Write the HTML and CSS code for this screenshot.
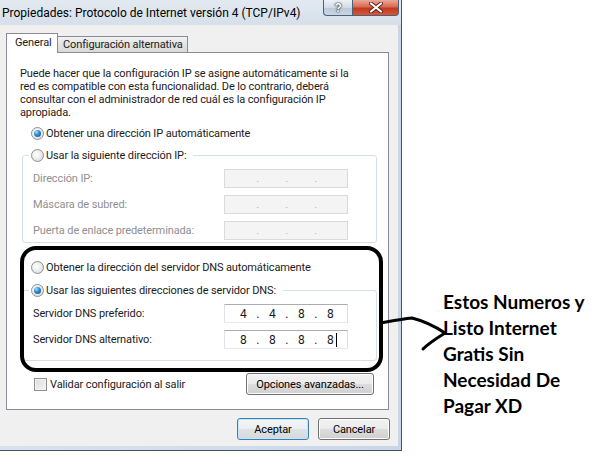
FILE: index.html
```html
<!DOCTYPE html>
<html lang="es">
<head>
<meta charset="utf-8">
<title>Propiedades TCP/IPv4</title>
<link rel="stylesheet" href="styles.css">
</head>
<body>
<div class="page">
  <div class="window">
    <div class="titlebar">
      <div class="title">Propiedades: Protocolo de Internet versión 4 (TCP/IPv4)</div>
      <div class="caption-btns">
        <div class="cbtn help">?</div>
        <div class="cbtn close">
          <svg width="16" height="11" viewBox="0 0 16 11">
            <path d="M3 1.5 L13 9.5 M13 1.5 L3 9.5" stroke="#5a2418" stroke-width="4" stroke-linecap="round"/>
            <path d="M3 1.5 L13 9.5 M13 1.5 L3 9.5" stroke="#ffffff" stroke-width="2.2" stroke-linecap="round"/>
          </svg>
        </div>
      </div>
    </div>
    <div class="dialog">
      <div class="tabs">
        <div class="tab active">General</div>
        <div class="tab">Configuración alternativa</div>
      </div>
      <div class="panel">
        <p class="intro">Puede hacer que la configuración IP se asigne automáticamente si la<br>red es compatible con esta funcionalidad. De lo contrario, deberá<br>consultar con el administrador de red cuál es la configuración IP<br>apropiada.</p>

        <div class="radio-row first"><span class="radio checked"></span>Obtener una dirección IP automáticamente</div>

        <fieldset class="group ip-group">
          <legend><span class="radio"></span>Usar la siguiente dirección IP:</legend>
          <div class="field disabled first-field">
            <span>Dirección IP:</span>
            <div class="ipbox"><span></span><span>.</span><span></span><span>.</span><span></span><span>.</span><span></span></div>
          </div>
          <div class="field disabled">
            <span>Máscara de subred:</span>
            <div class="ipbox"><span></span><span>.</span><span></span><span>.</span><span></span><span>.</span><span></span></div>
          </div>
          <div class="field disabled">
            <span>Puerta de enlace predeterminada:</span>
            <div class="ipbox"><span></span><span>.</span><span></span><span>.</span><span></span><span>.</span><span></span></div>
          </div>
        </fieldset>

        <div class="radio-row dns-auto"><span class="radio"></span>Obtener la dirección del servidor DNS automáticamente</div>

        <fieldset class="group dns-group">
          <legend><span class="radio checked"></span>Usar las siguientes direcciones de servidor DNS:</legend>
          <div class="field first-field">
            <span>Servidor DNS preferido:</span>
            <div class="ipbox"><span>4</span><span>.</span><span>4</span><span>.</span><span>8</span><span>.</span><span>8</span></div>
          </div>
          <div class="field">
            <span>Servidor DNS alternativo:</span>
            <div class="ipbox"><span>8</span><span>.</span><span>8</span><span>.</span><span>8</span><span>.</span><span class="caret-seg">8<i class="caret"></i></span></div>
          </div>
        </fieldset>

        <div class="bottom-row">
          <div class="check-row"><span class="checkbox"></span>Validar configuración al salir</div>
          <div class="btn wide">Opciones avanzadas...</div>
        </div>

        <div class="highlight"></div>
      </div>
      <div class="actions">
        <div class="btn default">Aceptar</div>
        <div class="btn">Cancelar</div>
      </div>
    </div>
  </div>
  <div class="note">Estos Numeros y<br>Listo Internet<br>Gratis Sin<br>Necesidad De<br>Pagar XD</div>
</div>
<svg class="arrow" width="600" height="475" viewBox="0 0 600 475">
  <path d="M381 323 C392 321 402 319 412 318 C424 321 436 327 445 333 C437 338 429 343 423 349" fill="none" stroke="#000" stroke-width="3" stroke-linecap="round" stroke-linejoin="round"/>
</svg>
</body>
</html>
```
FILE: styles.css
```css
* { box-sizing: border-box; }
html, body { margin: 0; padding: 0; background: #fff; }
body {
  width: 600px;
  height: 475px;
  overflow: hidden;
  position: relative;
  font-family: "Roboto", "Liberation Sans", sans-serif;
  font-size: 11px;
  letter-spacing: -0.12px;
  color: #1b1b1b;
}
.page { display: flex; align-items: flex-start; }

/* window */
.window {
  width: 402px;
  height: 451px;
  display: flex;
  flex-direction: column;
  background: linear-gradient(to right, #d8e3ee, #c9d7e5);
  padding: 0 3px 4px 0;
  border-right: 1px solid #44546a;
  border-bottom: 1px solid #44546a;
}
.titlebar {
  height: 25px;
  display: flex;
  justify-content: space-between;
  align-items: flex-start;
  background: linear-gradient(to bottom, #e2e9f1, #d6e0ea);
  margin-right: -3px;
}
.title {
  font-size: 12px;
  letter-spacing: 0;
  line-height: 26px;
  padding-left: 2px;
  color: #000;
  white-space: nowrap;
}
.caption-btns { display: flex; margin-right: 2px; }
.cbtn {
  height: 16px;
  border: 1px solid #4f5f74;
  border-top: none;
  display: flex;
  align-items: center;
  justify-content: center;
}
.help {
  width: 29px;
  border-radius: 0 0 0 4px;
  border-right: none;
  background: linear-gradient(to bottom, #eef2f7, #d2dce8 50%, #b9c8d9 51%, #c9d6e4);
  color: #fff;
  font-weight: bold;
  font-size: 12px;
  font-family: "Liberation Sans", sans-serif;
  text-shadow: 0 0 1px #2c3a4c, 0 0 1px #2c3a4c, 0 0 2px #2c3a4c;
}
.close {
  width: 47px;
  border-radius: 0 0 4px 0;
  background: linear-gradient(to bottom, #eaa898, #d66d55 45%, #c2391e 55%, #d6573a);
}

.dialog {
  flex: 1;
  background: #f0f0f0;
  padding: 8px 0 0 6px;
  display: flex;
  flex-direction: column;
}

/* tabs */
.tabs { display: flex; align-items: flex-end; height: 19px; position: relative; z-index: 2; }
.tab {
  height: 16px;
  border: 1px solid #898c95;
  border-bottom: none;
  border-left: none;
  background: linear-gradient(to bottom, #f2f2f2, #e3e3e3 50%, #d9d9d9);
  padding: 0 4px 0 5px;
  line-height: 15px;
  white-space: nowrap;
}
.tab.active {
  height: 20px;
  margin-bottom: -1px;
  width: 52px;
  background: #fff;
  border-left: 1px solid #898c95;
  padding-left: 8px;
  line-height: 18px;
}

/* panel */
.panel {
  position: relative;
  width: 383px;
  background: #fff;
  border: 1px solid #898c95;
  padding-bottom: 14px;
}
.intro {
  margin: 14px 0 0 13px;
  line-height: 13px;
  white-space: nowrap;
}
.radio-row {
  display: flex;
  align-items: center;
  height: 16px;
  gap: 2px;
  margin-left: 24px;
}
.radio-row.first { margin-top: 6px; }
.radio-row.dns-auto { margin-top: 16px; }
.radio {
  width: 13px;
  height: 13px;
  border-radius: 50%;
  border: 1px solid #8d9095;
  background: radial-gradient(circle at 40% 40%, #ffffff 0, #f0f0f0 40%, #cfd1d4 100%);
  position: relative;
  flex: none;
}
.radio.checked::after {
  content: "";
  position: absolute;
  left: 2px;
  top: 2px;
  width: 7px;
  height: 7px;
  border-radius: 50%;
  background: radial-gradient(circle at 35% 30%, #a9e2ff 0, #2f8fd3 40%, #0b4e93 100%);
}

.group {
  margin: 6px 0 0 15px;
  width: 355px;
  border: 1px solid #d5dfe5;
  border-radius: 3px;
  padding: 0 28px 2px 10px;
}
.group.dns-group { margin-top: 7px; padding-bottom: 11px; }
.group legend {
  display: flex;
  align-items: center;
  gap: 2px;
  height: 16px;
  margin-left: -4px;
  padding: 0 7px 0 2px;
}
.field {
  display: flex;
  justify-content: space-between;
  align-items: center;
  height: 19px;
  margin-top: 7px;
}
.field.first-field { margin-top: 6px; }
.field.disabled > span { color: #8f8f8f; }

.ipbox {
  width: 124px;
  height: 19px;
  border: 1px solid #abadb3;
  border-left-color: #e2e3ea;
  border-right-color: #dbdfe6;
  border-bottom-color: #e3e9ef;
  background: #fff;
  display: flex;
  align-items: center;
  padding-left: 11px;
  font-size: 12px;
  letter-spacing: 0;
}
.field.disabled .ipbox {
  background: #f4f4f4;
  border-color: #dadada;
  color: #8f8f8f;
  font-size: 9px;
}
.ipbox span { width: 14.5px; text-align: center; flex: none; }
.caret-seg { position: relative; }
.caret {
  position: absolute;
  right: 1px;
  top: 0;
  width: 1px;
  height: 14px;
  background: #000;
}

.bottom-row {
  display: flex;
  justify-content: space-between;
  align-items: center;
  margin: 12px 14px 0 27px;
  height: 22px;
}
.check-row { display: flex; align-items: center; gap: 3px; margin-top: 0; }
.checkbox {
  width: 13px;
  height: 13px;
  border: 1px solid #8e8f8f;
  background: linear-gradient(135deg, #dcdcdc, #f6f6f6);
  box-shadow: inset 0 0 0 1px #f4f4f4;
}

.btn {
  height: 22px;
  width: 72px;
  border: 1px solid #707070;
  border-radius: 3px;
  background: linear-gradient(to bottom, #f2f2f2, #ebebeb 50%, #dddddd 51%, #cfcfcf);
  box-shadow: inset 0 0 0 1px #fcfcfc;
  display: flex;
  align-items: center;
  justify-content: center;
  color: #000;
}
.btn.wide { width: 128px; }
.btn.default {
  border-color: #3c7fb1;
  box-shadow: inset 0 0 0 1px #c4e5f6;
  background: linear-gradient(to bottom, #f3f6f8, #ebeff2 50%, #dde2e6 51%, #d3d9de);
}

.actions {
  display: flex;
  justify-content: flex-end;
  gap: 9px;
  margin-top: 8px;
  padding-right: 8px;
}

.highlight {
  position: absolute;
  left: 13px;
  top: 193px;
  width: 363px;
  height: 126px;
  border: 4px solid #000;
  border-radius: 16px;
  pointer-events: none;
}

.note {
  margin-left: 41px;
  padding-top: 289px;
  font-family: "Lato", "Liberation Sans", sans-serif;
  font-weight: 700;
  font-size: 19px;
  letter-spacing: 0;
  line-height: 26px;
  color: #000;
  white-space: nowrap;
}

.arrow { position: absolute; left: 0; top: 0; pointer-events: none; }
```
